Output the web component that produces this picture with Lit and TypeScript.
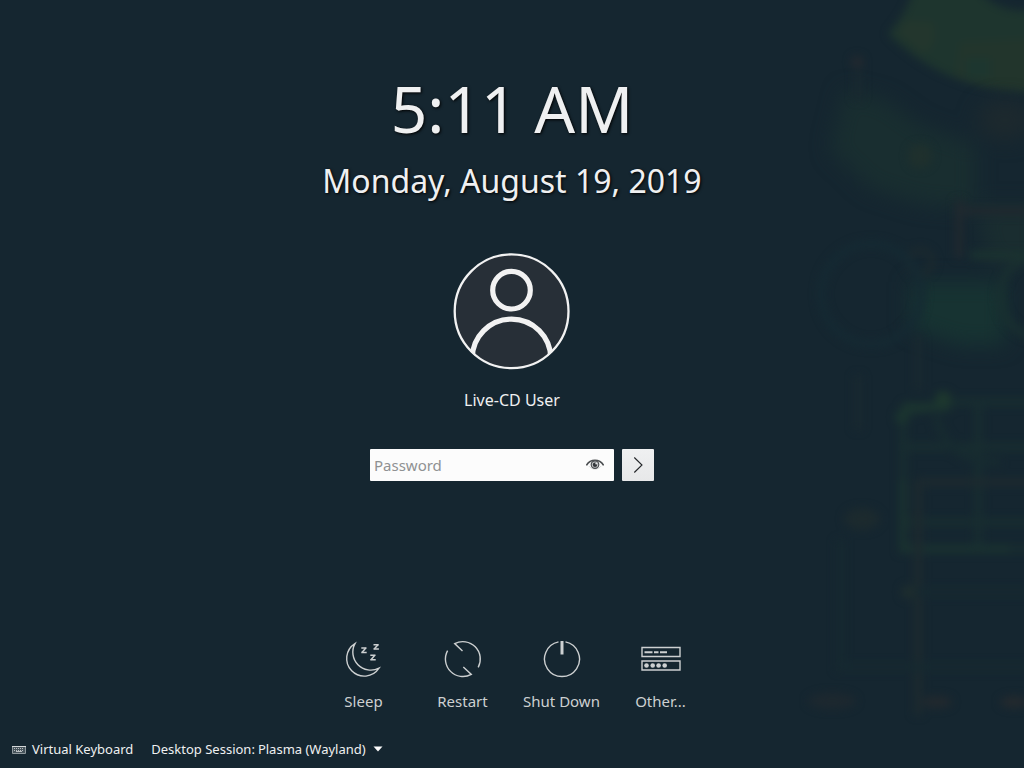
import { LitElement, html, css, svg } from "lit";
import { customElement, property, state } from "lit/decorators.js";

const actions = [
  {
    label: "Sleep",
    icon: svg`
      <path d="M11 4.6A17.6 17.6 0 1 0 35 29.2A18 18 0 0 1 11 4.6Z" />
      <path d="M17.3 9h5.2M17.3 13.4h5.4M29.5 5.7h5.2M29.5 10.1h5.4M26.3 16.3h5.2M26.3 20.7h5.4" stroke-width="1.5" />
      <path d="M21.8 9L18 13.4M34 5.7L30.2 10.1M30.8 16.3L27 20.7" stroke-width="1.5" />`,
  },
  {
    label: "Restart",
    icon: svg`
      <path d="M4.6 11.6A17.5 17.5 0 0 0 28.3 35.4L20.3 28" />
      <path d="M35.2 28.4A17.5 17.5 0 0 0 11.7 4.6L19.5 12" />`,
  },
  {
    label: "Shut Down",
    icon: svg`
      <path d="M16.5 2.9A17.5 17.5 0 1 0 23.5 2.9" />
      <path d="M20 2v13.5" stroke-width="3" />`,
  },
  {
    label: "Other...",
    icon: svg`
      <path d="M1 8.5h38v9H1zM1 22h38v9H1z" stroke-width="1.4" />
      <path d="M3.5 13.2h8M13 13.2h4.5M19 13.2h7" stroke-width="2" />
      <g fill="currentColor" stroke="none">
        <circle cx="5.5" cy="26.5" r="2.3" /><circle cx="11.7" cy="26.5" r="2.3" />
        <circle cx="17.6" cy="26.5" r="2.3" /><circle cx="23.7" cy="26.5" r="2.3" />
      </g>`,
  },
];

@customElement("wallpaper-art")
class WallpaperArt extends LitElement {
  static styles = css`
    :host { display: block; }
    .art { display: block; width: 100%; height: 100%; }
  `;
  render() {
    return html`<svg class="art" viewBox="680 0 344 768" preserveAspectRatio="xMaxYMin meet" aria-hidden="true">
      <defs>
        <filter id="soft" x="-20%" y="-20%" width="140%" height="140%" color-interpolation-filters="sRGB"><feGaussianBlur stdDeviation="4" /></filter>
        <filter id="wide" x="-30%" y="-30%" width="160%" height="160%" color-interpolation-filters="sRGB"><feGaussianBlur stdDeviation="10" /></filter>
      </defs>
      <g filter="url(#soft)">
        <path d="M915 -20C912 2 900 20 888 34C920 64 960 92 1040 93V8C1010 16 985 4 970 -20Z" fill="#1e352e" />
        <path d="M905 20L896 33L922 54C934 48 938 38 932 22Z" fill="#23362d" />
        <path d="M960 42L1040 38V90C1000 92 975 85 955 76Z" fill="#22352c" />
        <path d="M966 58h24v20h-24z" fill="#1d362f" />
      </g>
      <g filter="url(#wide)">
        <path d="M845 90L885 100L920 125L975 145V208L920 204L870 188L830 150Z" fill="#192e30" />
        <path d="M910 282H1005V345H960L910 328Z" fill="#173332" />
        <ellipse cx="1005" cy="120" rx="28" ry="20" fill="#1d292e" />
        <path d="M975 205H1040V265H990Z" fill="#1a2d30" />
      </g>
      <g filter="url(#soft)" fill="none" stroke-width="8">
        <circle cx="920" cy="156" r="12" fill="#1f302d" />
        <circle cx="857" cy="62" r="6" fill="#24292f" />
        <circle cx="920" cy="262" r="12" stroke="#1d2a2e" stroke-width="5" />
        <path d="M959 200V258M959 211H1030" stroke="#20292f" />
        <path d="M970 255H1035" stroke="#1b3330" />
        <circle cx="1042" cy="296" r="42" stroke="#1a3130" stroke-width="6" />
        <circle cx="871" cy="294" r="50" stroke="#152a33" stroke-width="7" />
        <path d="M1035 402H950L903 414V549H1035M978 402V545M903 447H1035M903 522H1035" stroke="#182d30" />
        <path d="M936 415Q945 462 1000 462" stroke="#172b30" />
        <path d="M903 480V549H1010" stroke="#1a3230" />
        <circle cx="902" cy="417" r="7" fill="#1b352f" />
        <circle cx="943" cy="399" r="8" fill="#1e382e" />
        <path d="M902 407H950" stroke="#1c362f" />
        <path d="M918 480V715M918 482H1035" stroke="#1d2a2f" />
        <ellipse cx="862" cy="519" rx="18" ry="11" fill="#1c2a2e" />
        <path d="M905 592H1030M840 540V667H1030" stroke="#162930" />
        <circle cx="908" cy="592" r="7" fill="#1e2d2e" />
        <ellipse cx="832" cy="701" rx="24" ry="8" fill="#1d282f" />
        <ellipse cx="937" cy="702" rx="15" ry="6" fill="#22292e" />
        <ellipse cx="1014" cy="702" rx="14" ry="6" fill="#242a2e" />
        <path d="M858 70V100M858 375V430M918 335V390" stroke="#192930" />
      </g>
    </svg>`;
  }
}

@customElement("session-action")
class SessionAction extends LitElement {
  @property() label = "";
  @property({ attribute: false }) icon: unknown;
  static styles = css`
    :host { display: block; }
    .action {
      width: 100%; display: flex; flex-direction: column; align-items: center; gap: 11px;
      padding: 0; border: 0; background: none; color: #cdd0d1;
      font: 15px/22px "Noto Sans", sans-serif; white-space: nowrap; cursor: pointer;
    }
    .icon { width: 40px; height: 40px; display: block; }
  `;
  render() {
    return html`<button class="action" type="button">
      <svg class="icon" viewBox="0 0 40 40" fill="none" stroke="currentColor" stroke-width="1.4" aria-hidden="true">${this.icon}</svg>
      <span>${this.label}</span>
    </button>`;
  }
}

@customElement("app-root")
class AppRoot extends LitElement {
  @state() private revealed = false;

  static styles = css`
    :host {
      display: block; position: relative; min-height: 100vh; overflow: hidden;
      background: #152630; color: #eff0f1; font-family: "Noto Sans", sans-serif;
    }
    * { box-sizing: border-box; }
    .wallpaper { position: absolute; top: 0; right: 0; bottom: 0; width: 34%; }
    .screen { position: relative; min-height: 100vh; display: flex; flex-direction: column; }
    .clock { padding-top: 65px; text-align: center; text-shadow: 1px 1px 3px #000; }
    .time { margin: 0; font-size: 64px; line-height: 88px; font-weight: 400; }
    .date { margin: 6px 0 0; font-size: 32px; line-height: 44px; }
    .login { display: flex; flex-direction: column; align-items: center; padding-top: 48px; }
    .avatar { width: 120px; height: 120px; display: block; }
    .name { margin: 18px 0 38px; font-size: 16px; line-height: 22px; font-weight: 400; }
    .form { display: flex; gap: 8px; }
    .field { width: 244px; height: 32px; display: flex; align-items: center; background: #fcfcfc; border-radius: 1px; }
    .password {
      flex: 1; min-width: 0; height: 32px; padding: 0 4px; border: 0; outline: 0; background: none;
      color: #232629; font: 15px/22px "Noto Sans", sans-serif;
    }
    .password::placeholder { color: #8f9192; opacity: 1; }
    .reveal { width: 38px; height: 32px; padding: 0; border: 0; background: none; display: grid; place-items: center; }
    .submit {
      width: 32px; height: 32px; padding: 0; border: 0; border-radius: 1px; display: grid; place-items: center;
      background: linear-gradient(#eff0f1, #e7e8e9);
    }
    .glyph { display: block; }
    .actions {
      margin-top: auto; display: grid; grid-template-columns: repeat(4, 99px);
      justify-content: center;
    }
    .footer {
      display: flex; align-items: center; gap: 18px; padding: 27px 12px 9px; font-size: 13px; line-height: 20px;
    }
    .keyboard {
      display: flex; align-items: center; gap: 6px; padding: 0; border: 0; background: none;
      color: inherit; font: inherit;
    }
    .session { display: flex; align-items: center; gap: 3px; }
    .picker { display: grid; align-items: center; }
    .choice {
      grid-area: 1 / 1; appearance: none; margin: 0; padding: 0 17px 0 0; border: 0; background: none;
      color: inherit; font: inherit;
    }
    .caret { grid-area: 1 / 1; justify-self: end; pointer-events: none; }
  `;

  render() {
    return html`
      <wallpaper-art class="wallpaper"></wallpaper-art>
      <main class="screen">
        <header class="clock">
          <h1 class="time">5:11 AM</h1>
          <p class="date">Monday, August 19, 2019</p>
        </header>
        <section class="login">
          <svg class="avatar" viewBox="0 0 120 120" fill="none" stroke="#f2f2f2" aria-hidden="true">
            <defs><clipPath id="disc"><circle cx="59.6" cy="60.3" r="57.5" /></clipPath></defs>
            <circle cx="59.6" cy="60.3" r="56.9" fill="#272f37" stroke-width="2.3" />
            <g clip-path="url(#disc)" stroke-width="5.2">
              <circle cx="59.5" cy="39.2" r="18.8" />
              <path d="M20.2 107.4A39.3 39.3 0 0 1 98.8 107.4" />
            </g>
          </svg>
          <h2 class="name">Live-CD User</h2>
          <form class="form" @submit=${(e: Event) => e.preventDefault()}>
            <div class="field">
              <input class="password" type=${this.revealed ? "text" : "password"} placeholder="Password" aria-label="Password" />
              <button class="reveal" type="button" aria-label="Show password" @click=${() => (this.revealed = !this.revealed)}>
                <svg class="glyph" width="18" height="12" viewBox="0 0 18 12" fill="none" stroke="#4a4d50">
                  <path d="M.4 6.4C4.2-.4 13.8-.4 17.6 6.4" stroke-width="1.6" />
                  <path d="M2.8 7C6 11.2 12 11.2 15.2 7" stroke-width=".5" stroke="#b4b6b7" />
                  <circle cx="9" cy="5.6" r="3.8" fill="#c4c6c7" stroke-width="1.2" />
                  <circle cx="9" cy="5.8" r="2.2" fill="#33363a" stroke="none" />
                  <circle cx="10.2" cy="4.6" r=".9" fill="#e5e6e7" stroke="none" />
                </svg>
              </button>
            </div>
            <button class="submit" type="submit" aria-label="Log in">
              <svg class="glyph" width="16" height="16" viewBox="0 0 16 16" fill="none" stroke="#232629" stroke-width="1.1">
                <path d="M4.3.5L12 8L4.3 15.5" />
              </svg>
            </button>
          </form>
        </section>
        <nav class="actions">
          ${actions.map((a) => html`<session-action .label=${a.label} .icon=${a.icon}></session-action>`)}
        </nav>
        <footer class="footer">
          <button class="keyboard" type="button">
            <svg class="glyph" width="14" height="12" viewBox="0 0 14 12" fill="none" stroke="#b9bec1">
              <path d="M.5 3.5h13v7H.5z" fill="#47545b" stroke="#8f989d" />
              <path d="M0 3.5h14" stroke="#d5d8da" />
              <path d="M2 5.5h10M2 7.5h10" stroke-dasharray="1 1" />
              <path d="M4 8.5h6" />
            </svg>
            Virtual Keyboard
          </button>
          <div class="session">
            <label for="session">Desktop Session:</label>
            <span class="picker">
              <select class="choice" id="session"><option>Plasma (Wayland)</option></select>
              <svg class="caret" width="10" height="6" viewBox="0 0 10 6" fill="#fcfcfc" aria-hidden="true"><path d="M.5.5h9L5 5.5z" /></svg>
            </span>
          </div>
        </footer>
      </main>
    `;
  }
}
